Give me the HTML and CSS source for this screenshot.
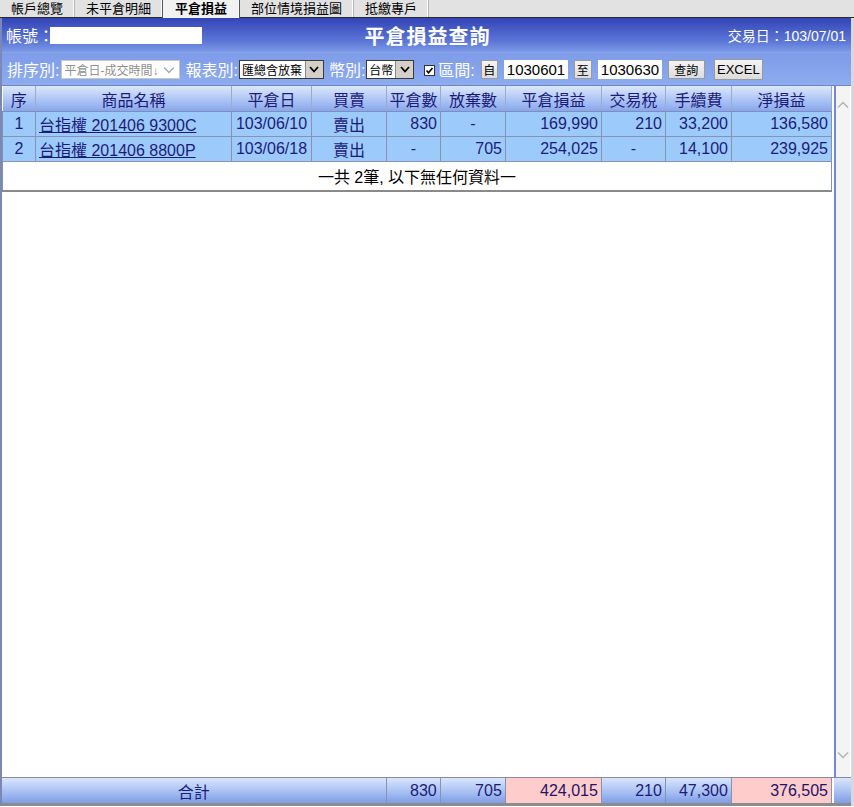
FILE: index.html
```html
<!DOCTYPE html>
<html lang="zh-Hant">
<head>
    <meta charset="UTF-8">
    <title>平倉損益查詢</title>
    <link rel="stylesheet" href="styles.css">
</head>
<body>
    <div class="tabs">
        <div class="tab">帳戶總覽</div>
        <div class="tab">未平倉明細</div>
        <div class="tab active">平倉損益</div>
        <div class="tab">部位情境損益圖</div>
        <div class="tab">抵繳專戶</div>
    </div>

    <div class="panel">
        <div class="head">
            <div class="acct">帳號：<span class="acct-box"></span></div>
            <div class="title">平倉損益查詢</div>
            <div class="tday">交易日：103/07/01</div>
        </div>

        <div class="filters">
            <span class="lbl">排序別:</span>
            <span class="sel sel-off sel-sort">平倉日-成交時間↓
                <svg class="chev" width="12" height="8" viewBox="0 0 12 8"><path d="M1 1.5 L6 6.5 L11 1.5" fill="none" stroke="#a8a8a8" stroke-width="1.4"/></svg>
            </span>
            <span class="lbl">報表別:</span>
            <span class="sel sel-type">匯總含放棄<span class="drop"><svg width="10" height="7" viewBox="0 0 10 7"><path d="M1 1 L5 5.5 L9 1" fill="none" stroke="#000" stroke-width="1.8"/></svg></span></span>
            <span class="lbl">幣別:</span>
            <span class="sel sel-cur">台幣<span class="drop"><svg width="10" height="7" viewBox="0 0 10 7"><path d="M1 1 L5 5.5 L9 1" fill="none" stroke="#000" stroke-width="1.8"/></svg></span></span>
            <span class="chk"><svg width="11" height="11" viewBox="0 0 11 11"><rect x="0.5" y="0.5" width="10" height="10" fill="#fff" stroke="#333"/><path d="M2.5 5.5 L4.5 7.8 L8.5 3" fill="none" stroke="#000" stroke-width="1.6"/></svg></span>
            <span class="lbl lbl-range">區間:</span>
            <span class="btn btn-sm">自</span>
            <span class="date">1030601</span>
            <span class="btn btn-sm btn-to">至</span>
            <span class="date">1030630</span>
            <span class="btn btn-q">查詢</span>
            <span class="btn btn-x">EXCEL</span>
        </div>

        <div class="grid-wrap">
            <div class="grid-main">
                <table class="grid">
                    <colgroup>
                        <col style="width:33px"><col style="width:196px"><col style="width:80px"><col style="width:75px"><col style="width:54px">
                        <col style="width:65px"><col style="width:96px"><col style="width:64px"><col style="width:66px"><col style="width:100px">
                    </colgroup>
                    <thead>
                        <tr>
                            <th>序</th><th>商品名稱</th><th>平倉日</th><th>買賣</th><th>平倉數</th>
                            <th>放棄數</th><th>平倉損益</th><th>交易稅</th><th>手續費</th><th>淨損益</th>
                        </tr>
                    </thead>
                    <tbody>
                        <tr class="row">
                            <td class="c">1</td><td class="l"><a href="#">台指權 201406 9300C</a></td><td class="c">103/06/10</td><td class="c">賣出</td><td class="r">830</td>
                            <td class="c">-</td><td class="r">169,990</td><td class="r">210</td><td class="r">33,200</td><td class="r">136,580</td>
                        </tr>
                        <tr class="row">
                            <td class="c">2</td><td class="l"><a href="#">台指權 201406 8800P</a></td><td class="c">103/06/18</td><td class="c">賣出</td><td class="c">-</td>
                            <td class="r">705</td><td class="r">254,025</td><td class="c">-</td><td class="r">14,100</td><td class="r">239,925</td>
                        </tr>
                        <tr class="end">
                            <td colspan="10">一共 2筆, 以下無任何資料一</td>
                        </tr>
                    </tbody>
                </table>
            </div>
            <div class="vscroll">
                <svg width="12" height="8" viewBox="0 0 12 8"><path d="M1 6.5 L6 1.5 L11 6.5" fill="none" stroke="#b4b4b4" stroke-width="1.5"/></svg>
                <svg width="12" height="8" viewBox="0 0 12 8"><path d="M1 1.5 L6 6.5 L11 1.5" fill="none" stroke="#b4b4b4" stroke-width="1.5"/></svg>
            </div>
        </div>

        <div class="foot">
            <table class="grid sum">
                <colgroup>
                    <col style="width:384px"><col style="width:54px">
                    <col style="width:65px"><col style="width:96px"><col style="width:64px"><col style="width:66px"><col style="width:100px">
                </colgroup>
                <tr>
                    <td class="c">合計</td><td class="r">830</td><td class="r">705</td><td class="r pink">424,015</td>
                    <td class="r">210</td><td class="r">47,300</td><td class="r pink">376,505</td>
                </tr>
            </table>
            <div class="corner"></div>
        </div>
    </div>
</body>
</html>
```

FILE: styles.css
```css
body {
    margin: 0;
    background: #fff;
    font-family: "Liberation Sans", "Noto Sans CJK TC", sans-serif;
    width: 854px;
}

/* tab strip */
.tabs {
    display: flex;
    height: 17px;
    background: #e2e2e2;
    border-bottom: 1px solid #2a2a2a;
}
.tab {
    padding: 0 11px;
    font-size: 13px;
    line-height: 17px;
    color: #000;
    border-right: 1px solid #b8b8b8;
    box-shadow: inset -1px 0 0 #fafafa;
}
.tab.active {
    background: #f2f2f2;
    font-weight: bold;
    padding: 0 12px;
    border-left: 1px solid #555;
    border-right: 1px solid #555;
    margin-left: -1px;
    height: 18px;
}

.panel {
    border-left: 2px solid #7c88b4;
    border-right: 3px solid #d8d8dc;
}

/* title bar */
.head {
    display: grid;
    grid-template-columns: 1fr auto 1fr;
    align-items: center;
    height: 34px;
    padding: 0 4px;
    background: linear-gradient(#3344b6, #5d78d8 70%, #7c9ae6);
    color: #fff;
    border-bottom: 1px solid #8aa4ea;
}
.acct {
    font-size: 16px;
    display: flex;
    align-items: center;
}
.acct-box {
    display: inline-block;
    width: 152px;
    height: 17px;
    margin-left: -4px;
    background: #fff;
}
.title {
    font-size: 20px;
    font-weight: bold;
    letter-spacing: 1px;
    padding-left: 2px;
}
.tday {
    text-align: right;
    font-size: 14px;
    padding-right: 1px;
}

/* filter row */
.filters {
    display: flex;
    align-items: center;
    height: 32px;
    padding-left: 5px;
    background: linear-gradient(#7e9ce8, #8eacef);
    border-bottom: 1px solid #6f88c8;
    color: #fff;
}
.lbl {
    font-size: 16px;
    margin-right: 1px;
}
.sel {
    position: relative;
    display: inline-flex;
    align-items: center;
    height: 19px;
    box-sizing: border-box;
    background: #fff;
    font-size: 12px;
    color: #000;
    padding-left: 2px;
    margin-right: 5px;
    border: 1px solid #3a3a3a;
}
.sel-off {
    border-color: #c6c6c6;
    color: #909090;
}
.sel-sort { width: 119px; margin-left: 1px; }
.sel-type { width: 85px; }
.sel-cur { width: 48px; }
.chev {
    position: absolute;
    right: 4px;
    top: 5px;
}
.drop {
    position: absolute;
    right: 0;
    top: 0;
    width: 17px;
    height: 17px;
    background: #d4d0c8;
    border-left: 1px solid #888;
    display: flex;
    align-items: center;
    justify-content: center;
}
.chk {
    display: inline-flex;
    margin: 2px 3px 0 5px;
}
.lbl-range {
    margin-right: 6px;
}
.btn {
    display: inline-flex;
    align-items: center;
    justify-content: center;
    box-sizing: border-box;
    height: 19px;
    background: linear-gradient(#f4f4f4, #dcdcdc);
    border: 1px solid #9a9a9a;
    color: #000;
    font-size: 12px;
}
.btn-sm {
    width: 17px;
    margin-right: 6px;
}
.btn-to {
    width: 18px;
}
.date {
    display: inline-block;
    width: 64px;
    height: 19px;
    line-height: 19px;
    background: #fff;
    color: #000;
    font-size: 15px;
    padding-left: 3px;
    box-sizing: border-box;
    margin-right: 6px;
}
.btn-q {
    width: 37px;
    margin-right: 9px;
}
.btn-x {
    width: 49px;
    height: 21px;
    font-size: 13px;
}

/* grid */
.grid-wrap {
    display: flex;
    height: 691px;
}
.grid-main {
    width: 831px;
    background: #fff;
}
.grid {
    table-layout: fixed;
    border-collapse: collapse;
    width: 830px;
    font-size: 16px;
    color: #1c1c78;
}
.grid th {
    height: 25px;
    padding: 0;
    font-weight: normal;
    background: linear-gradient(#dbe7fb, #a9c1f3 60%, #88a6ec);
    border-right: 1px solid #9aaad0;
    border-bottom: 1px solid #7f8fb8;
}
.grid td {
    padding: 0 3px;
    border: 1px solid #8792b0;
    white-space: nowrap;
}
.row td {
    height: 24px;
    background: #9ccafb;
}
.grid .c { text-align: center; }
.grid .r { text-align: right; }
.grid .l { text-align: left; }
.grid a {
    color: #1c1c78;
}
.end td {
    height: 28px;
    text-align: center;
    color: #000;
    background: #fff;
    border-bottom: 2px solid #8a8a8a;
}

.vscroll {
    width: 16px;
    margin-left: 1px;
    border-left: 2px solid #6e8ad8;
    background: #f4f4f4;
    display: flex;
    flex-direction: column;
    justify-content: space-between;
    align-items: center;
    padding: 15px 0 18px;
    box-sizing: border-box;
}

/* totals */
.foot {
    display: flex;
    height: 25px;
    border-top: 1px solid #8a8a9a;
    border-bottom: 3px solid #8c8c8c;
    background: #fff;
}
.sum {
    width: 830px;
}
.sum td {
    height: 23px;
    padding: 0 3px;
    border-top: 0;
    border-bottom: 0;
    background: linear-gradient(#d8e6fb, #a8c0f2 55%, #7f9de8);
}
.sum td:first-child {
    border-left: 0;
}
.sum td.pink {
    background: #ffcccc;
    color: #221466;
}
.corner {
    width: 17px;
    margin-left: 2px;
    background: linear-gradient(#d8e6fb, #a8c0f2 55%, #7f9de8);
}
```
